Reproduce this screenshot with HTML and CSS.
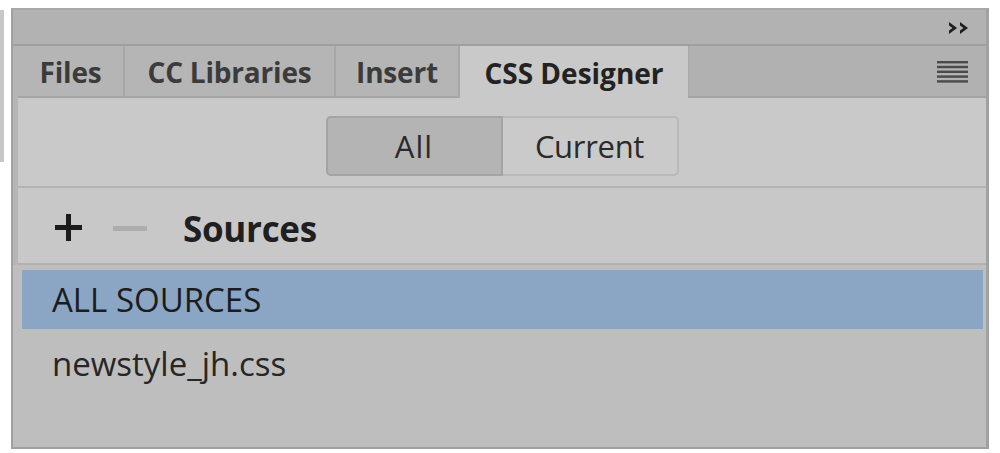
FILE: index.html
```html
<!DOCTYPE html>
<html>
<head>
<meta charset="utf-8">
<link rel="stylesheet" href="styles.css">
</head>
<body>
<div class="page">
  <div class="edge-strip"></div>
  <div class="panel">
    <div class="titlebar">
      <svg class="collapse" width="22" height="14" viewBox="0 0 22 14">
        <path d="M1 1 L9 7 L1 13 L1 9.5 L4.5 7 L1 4.5 Z" fill="#1e1e1e"/>
        <path d="M12 1 L20 7 L12 13 L12 9.5 L15.5 7 L12 4.5 Z" fill="#1e1e1e"/>
      </svg>
    </div>
    <div class="tabrow">
      <div class="tab tab-files">Files</div>
      <div class="tab tab-cc">CC Libraries</div>
      <div class="tab tab-insert">Insert</div>
      <div class="tab tab-active">CSS Designer</div>
      <div class="tab-fill">
        <svg class="menu" width="31" height="22" viewBox="0 0 31 22">
          <rect x="0" y="0" width="31" height="2.4" fill="#4a4a4a"/>
          <rect x="0" y="4.8" width="31" height="2.4" fill="#4a4a4a"/>
          <rect x="0" y="9.6" width="31" height="2.4" fill="#4a4a4a"/>
          <rect x="0" y="14.4" width="31" height="2.4" fill="#4a4a4a"/>
          <rect x="0" y="19.2" width="31" height="2.4" fill="#4a4a4a"/>
        </svg>
      </div>
    </div>
    <div class="filter-row">
      <div class="segmented">
        <div class="seg seg-on">All</div>
        <div class="seg">Current</div>
      </div>
    </div>
    <div class="sources-head">
      <span class="plus"></span>
      <span class="minus"></span>
      <span class="sources-title">Sources</span>
    </div>
    <div class="list">
      <div class="item item-selected">ALL SOURCES</div>
      <div class="item">newstyle_jh.css</div>
    </div>
  </div>
</div>
</body>
</html>
```

FILE: styles.css
```css
html, body {
  margin: 0;
  padding: 0;
  background: #ffffff;
}

.page {
  display: flex;
  align-items: flex-start;
  width: 1000px;
  height: 453px;
  padding-top: 8px;
  box-sizing: border-box;
  font-family: "Open Sans", "Noto Sans", "DejaVu Sans", sans-serif;
  color: #262626;
}

.edge-strip {
  width: 4px;
  height: 152px;
  margin-top: 2px;
  background: #c7c7c7;
  margin-right: 7px;
}

.panel {
  width: 978px;
  height: 441px;
  box-sizing: border-box;
  border: 2px solid #a1a1a1;
  border-top-color: #a8a8a8;
  border-right-width: 3px;
  background: #bdbdbd;
  display: flex;
  flex-direction: column;
  box-shadow: inset 5px 0 0 #b6b6b6;
}

.titlebar {
  height: 34px;
  background: #b2b2b2;
  border-bottom: 2px solid #9f9f9f;
  display: flex;
  justify-content: flex-end;
  align-items: center;
  padding-right: 16px;
  flex: none;
}

.collapse {
  display: block;
  margin-top: 1px;
}

.tabrow {
  height: 52px;
  display: flex;
  padding-left: 5px;
  background: #b6b6b6;
  flex: none;
}

.tab {
  height: 52px;
  box-sizing: border-box;
  display: flex;
  align-items: center;
  justify-content: center;
  font-weight: 700;
  font-size: 28px;
  color: #3b3b3b;
  background: #b5b5b5;
  border-right: 2px solid #a7a7a7;
  border-bottom: 2px solid #a5a5a5;
  letter-spacing: -0.2px;
  padding-top: 2px;
}

.tab-files { width: 107px; }
.tab-cc { width: 211px; }
.tab-insert { width: 124px; }

.tab-active {
  width: 228px;
  background: #c9c9c9;
  border-right: none;
  border-bottom: none;
  color: #222222;
  letter-spacing: 0;
}

.tab-fill {
  flex: 1;
  background: #b1b1b1;
  border-bottom: 2px solid #a3a3a3;
  border-left: 1px solid #a9a9a9;
  display: flex;
  justify-content: flex-end;
  align-items: center;
  padding-right: 18px;
}

.menu {
  display: block;
  margin-top: 2px;
}

.filter-row {
  height: 88px;
  background: #c9c9c9;
  border-bottom: 2px solid #b3b3b3;
  display: flex;
  justify-content: center;
  align-items: center;
  margin-left: 5px;
  flex: none;
}

.segmented {
  display: flex;
  width: 353px;
  height: 60px;
  margin-top: 8px;
  box-sizing: border-box;
  border: 2px solid #b9b9b9;
  border-radius: 5px;
  background: #cacaca;
}

.seg {
  flex: 1;
  display: flex;
  align-items: center;
  justify-content: center;
  font-size: 31px;
  color: #2a2a2a;
  letter-spacing: -0.3px;
}

.seg-on {
  flex: none;
  width: 177px;
  margin: -2px 0 -2px -2px;
  border: 2px solid #a4a4a4;
  border-radius: 5px 0 0 5px;
  background: #b4b4b4;
  box-sizing: border-box;
  letter-spacing: 1px;
}

.sources-head {
  height: 75px;
  background: #c8c8c8;
  border-bottom: 2px solid #b1b1b1;
  margin-left: 5px;
  display: flex;
  align-items: center;
  padding-left: 37px;
  flex: none;
}

.plus {
  position: relative;
  width: 27px;
  height: 27px;
  margin-top: 4px;
}

.plus::before,
.plus::after {
  content: "";
  position: absolute;
  background: #1c1c1c;
}

.plus::before {
  left: 0;
  right: 0;
  top: 11px;
  height: 5px;
}

.plus::after {
  top: 0;
  bottom: 0;
  left: 11px;
  width: 5px;
}

.minus {
  width: 34px;
  height: 5px;
  background: #adadad;
  margin-left: 31px;
  margin-top: 6px;
}

.sources-title {
  font-weight: 700;
  font-size: 35px;
  color: #1f1f1f;
  margin-left: 36px;
  margin-top: 6px;
  letter-spacing: -0.3px;
}

.list {
  flex: 1;
  background: #bebebe;
  padding: 5px 3px 0 9px;
}

.item {
  height: 60px;
  display: flex;
  align-items: center;
  padding-left: 30px;
  font-size: 33px;
  color: #262626;
}

.item-selected {
  background: #8ba5c4;
  color: #1c1c1c;
  height: 59px;
  margin-bottom: 4px;
}
```
